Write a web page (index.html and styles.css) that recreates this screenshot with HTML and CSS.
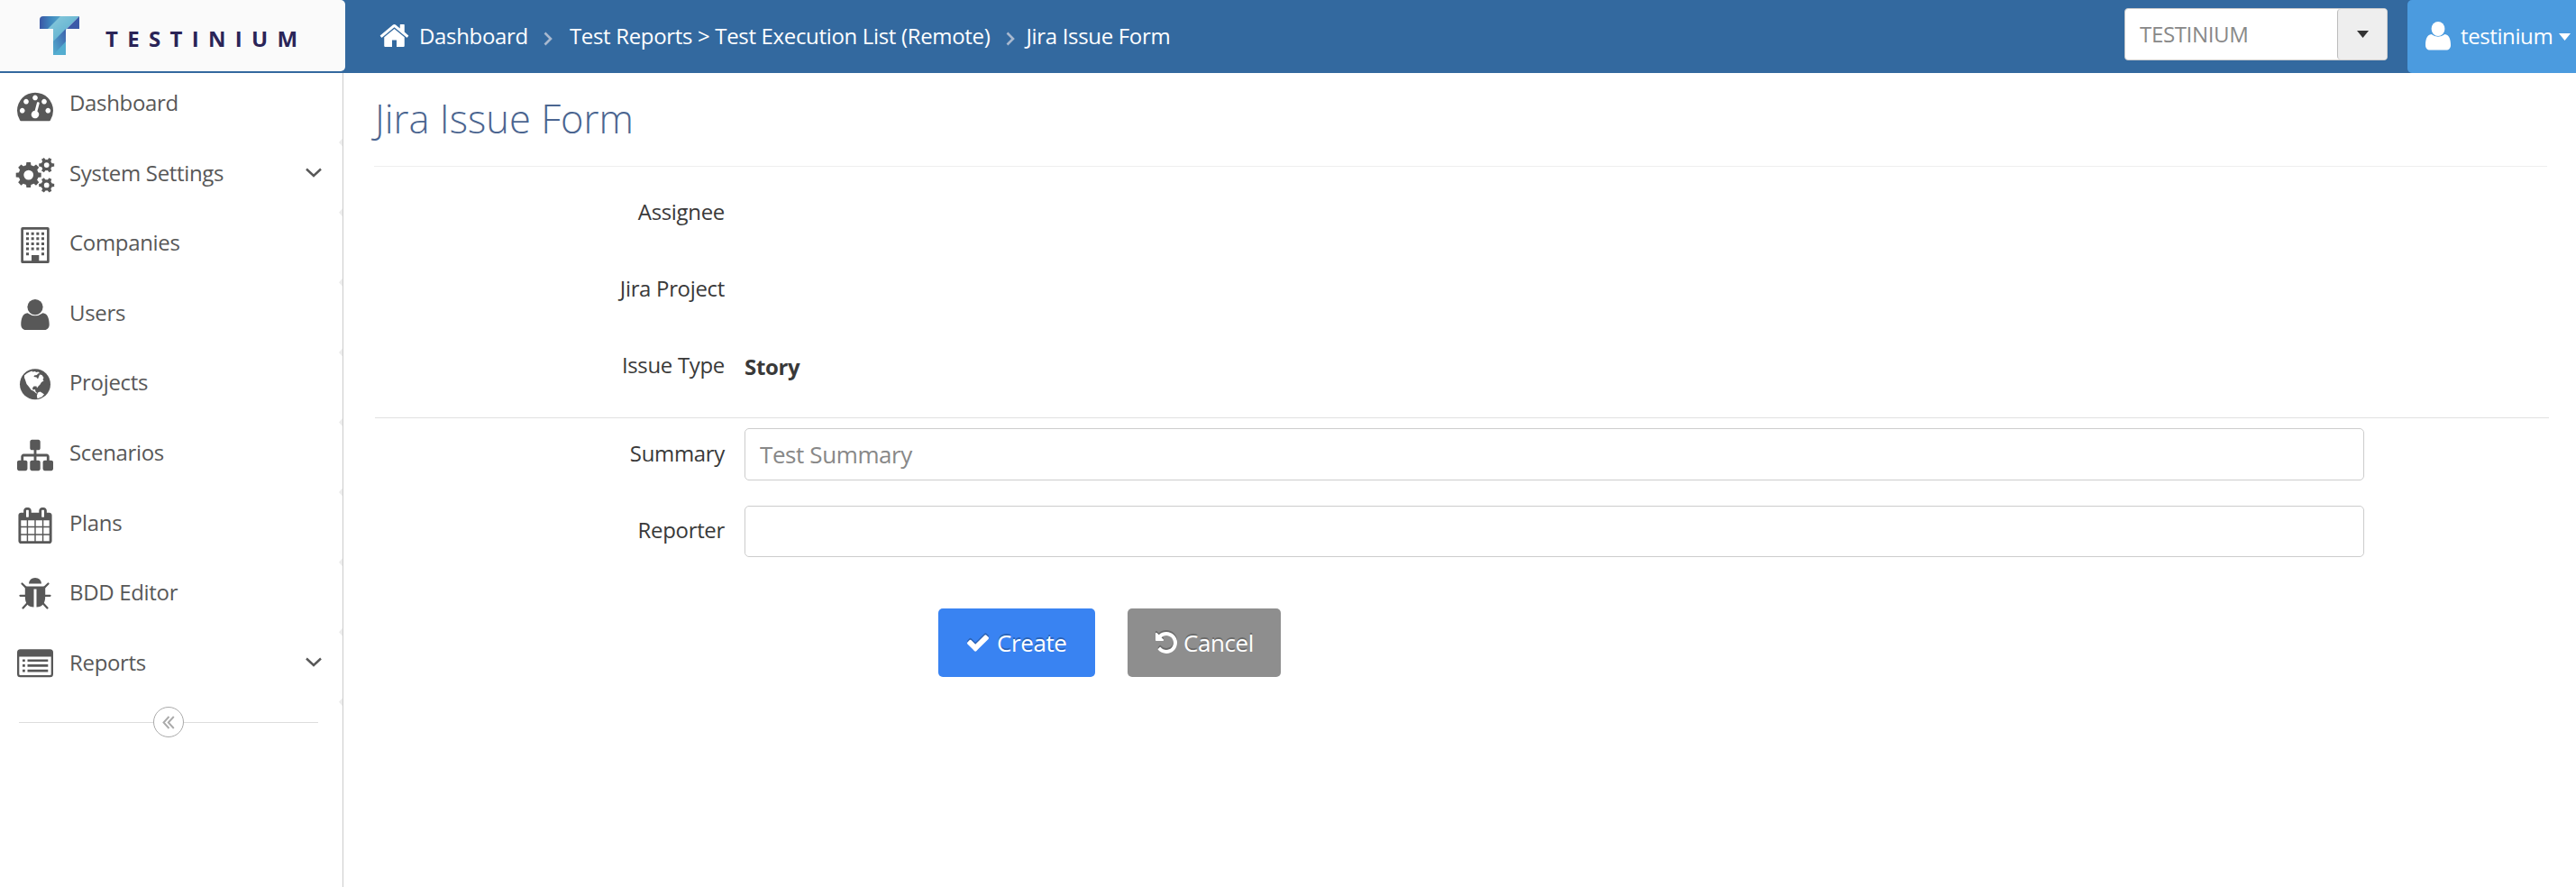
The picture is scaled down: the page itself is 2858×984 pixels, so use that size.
FILE: index.html
```html
<!DOCTYPE html>
<html lang="en">
<head>
<meta charset="utf-8">
<title>Jira Issue Form</title>
<link rel="stylesheet" href="styles.css">
</head>
<body>
<header class="topbar">
  <div class="brand">
    <svg class="brand-mark" viewBox="0 0 44 43">
      <defs>
        <linearGradient id="g1" x1="0" y1="0" x2="1" y2="0"><stop offset="0" stop-color="#3a56a5"/><stop offset=".5" stop-color="#3f86bd"/><stop offset="1" stop-color="#55a9cb"/></linearGradient>
        <linearGradient id="g2" x1="0" y1="0" x2="1" y2="1"><stop offset="0" stop-color="#8ccbdc"/><stop offset="1" stop-color="#4fa8cc"/></linearGradient>
        <linearGradient id="g3" x1="0" y1="1" x2="1" y2="0"><stop offset="0" stop-color="#56b0d0"/><stop offset="1" stop-color="#3a5fab"/></linearGradient>
      </defs>
      <path fill="url(#g1)" d="M4 0H24L10 14H0V4Q0 0 4 0Z"/>
      <path fill="url(#g2)" d="M23 0H44L15 29V14H9Z"/>
      <path fill="#3c5aa8" d="M44 0V14H30Z"/>
      <path fill="url(#g3)" d="M15 28L29 14V43H15Z"/>
      <path fill="#54add0" d="M15 43L29 28V43Z"/>
    </svg>
    <span class="brand-name">TESTINIUM</span>
  </div>
  <nav class="crumbs">
    <svg class="home" viewBox="0 0 1792 1792"><path fill="#fff" d="M1472 992v480q0 26-19 45t-45 19h-384v-384h-256v384h-384q-26 0-45-19t-19-45v-480q0-1 .5-3t.5-3l575-474 575 474q1 2 1 6zm223-69l-62 74q-8 9-21 11h-3q-13 0-21-7l-692-577-692 577q-12 8-24 7-13-2-21-11l-62-74q-8-10-7-23.5t11-21.5l719-599q32-26 76-26t76 26l244 204v-195q0-14 9-23t23-9h192q14 0 23 9t9 23v408l219 182q10 8 11 21.5t-7 23.5z"/></svg>
    <span class="crumb-first">Dashboard</span>
    <svg class="sep" viewBox="0 0 10 16"><path d="M1.5 1.5L8 8L1.5 14.5"/></svg>
    <span class="crumb-mid">Test Reports &gt; Test Execution List (Remote)</span>
    <svg class="sep" viewBox="0 0 10 16"><path d="M1.5 1.5L8 8L1.5 14.5"/></svg>
    <span class="crumb-last">Jira Issue Form</span>
  </nav>
  <div class="company">
    <span class="company-name">TESTINIUM</span>
    <span class="company-btn"><svg class="caret" viewBox="0 0 13 8"><path fill="#333" d="M0 0H13L6.5 8Z"/></svg></span>
  </div>
  <div class="account">
    <svg class="account-icon" viewBox="0 0 28 32"><ellipse cx="14" cy="8" rx="7.4" ry="8" fill="#fff"/><path fill="#fff" d="M6.5 14Q14 19.6 21.5 14C26.5 14.4 28 20 28 26C28 29.500 26 31.500 23 31.500H5C2 31.500 0 29.500 0 26C0 20 1.500 14.400 6.500 14Z"/></svg>
    <span>testinium</span>
    <svg class="caret" viewBox="0 0 13 8"><path fill="#fff" d="M0 0H13L6.500 8Z"/></svg>
  </div>
</header>
<div class="body">
  <aside class="sidebar">
    <a class="item"><svg class="icon" viewBox="0 0 1792 1792"><path d="M384 1152q0-53-37.5-90.5t-90.5-37.5-90.5 37.5-37.5 90.5 37.5 90.5 90.5 37.5 90.5-37.5 37.5-90.5zm192-448q0-53-37.5-90.5t-90.5-37.5-90.5 37.5-37.5 90.5 37.5 90.5 90.5 37.5 90.5-37.5 37.5-90.5zm428 481l101-382q6-26-7.5-48.5t-38.5-29.5-48 6.5-30 39.5l-101 382q-60 5-107 43.5t-63 98.5q-20 77 20 146t117 89 146-20 89-117q16-60-6-117t-72-91zm660-33q0-53-37.5-90.5t-90.5-37.5-90.5 37.5-37.5 90.5 37.5 90.5 90.5 37.5 90.5-37.5 37.5-90.5zm-640-640q0-53-37.5-90.5t-90.5-37.5-90.5 37.5-37.5 90.5 37.5 90.5 90.5 37.5 90.5-37.5 37.5-90.5zm448 192q0-53-37.5-90.5t-90.5-37.5-90.5 37.5-37.5 90.5 37.5 90.5 90.5 37.5 90.5-37.5 37.5-90.5zm320 448q0 261-141 483-19 29-54 29h-1402q-35 0-54-29-141-221-141-483 0-182 71-348t191-286 286-191 348-71 348 71 286 191 191 286 71 348z"/></svg><span>Dashboard</span></a>
    <a class="item"><svg class="icon" viewBox="0 0 40 40">
      <defs>
        <path id="tooth" d="M-2.900 -9.500L-2.300 -14H2.300L2.900 -9.500Z"/>
        <path id="tooth-s" d="M-2.100 -5.400L-1.500 -8.600Q0 -8.200 1.500 -8.600L2.100 -5.400Z"/>
        <g id="gear-s"><circle r="4.500" fill="none" stroke="#585858" stroke-width="3.200"/><use href="#tooth-s" transform="rotate(30)"/><use href="#tooth-s" transform="rotate(90)"/><use href="#tooth-s" transform="rotate(150)"/><use href="#tooth-s" transform="rotate(210)"/><use href="#tooth-s" transform="rotate(270)"/><use href="#tooth-s" transform="rotate(330)"/></g>
      </defs>
      <g transform="translate(12.700 19.100)"><circle r="8.200" fill="none" stroke="#585858" stroke-width="5.600"/><use href="#tooth"/><use href="#tooth" transform="rotate(45)"/><use href="#tooth" transform="rotate(90)"/><use href="#tooth" transform="rotate(135)"/><use href="#tooth" transform="rotate(180)"/><use href="#tooth" transform="rotate(225)"/><use href="#tooth" transform="rotate(270)"/><use href="#tooth" transform="rotate(315)"/></g>
      <use href="#gear-s" x="32.700" y="8.100"/><use href="#gear-s" x="32.700" y="30.400"/></svg><span>System Settings</span><svg class="chev" viewBox="0 0 18 11"><path d="M1 1.500L9 9L17 1.500"/></svg></a>
    <a class="item"><svg class="icon" viewBox="0 0 40 40"><rect x="5.600" y="1.300" width="28.800" height="37.400" rx=".5" fill="none" stroke="#585858" stroke-width="2.700"/><path fill="none" stroke="#585858" stroke-width="3" stroke-dasharray="3 2.670" d="M10 7.200H30M10 12.800H30M10 18.500H30M10 24.100H30"/><path d="M10 28.200h3v3h-3zM27 28.200h3v3h-3zM16 31h8.300v8H16z"/></svg><span>Companies</span></a>
    <a class="item"><svg class="icon" viewBox="0 0 40 40"><circle cx="20" cy="10.600" r="8.600"/><path d="M11.500 17.300Q20 23.400 28.500 17.300C34 17.600 35.700 24 35.700 30C35.700 33.500 33.500 36 30.500 36H9.500C6.500 36 4.300 33.500 4.300 30C4.300 24 6 17.600 11.500 17.300Z"/></svg><span>Users</span></a>
    <a class="item"><svg class="icon" viewBox="0 0 40 40"><circle cx="20" cy="19.300" r="17"/><path fill="#fff" d="M8 9.500L11 7L14 5.500L16.500 4.500L17 5.500L20 5L21 6L23.500 5.500L25 7L23 7.500L22 9L19 9.500L18.500 11L21.500 11.500L23 13.500L24 11L25 8.500L27.500 9L29.500 12L28.500 14L29.500 15.500L27 17L25.500 19.500L23.500 21.500L22 23.500L21.500 21.500L18.500 21.500L17 23.500L17.500 25.500L20 25L20.500 27.500L22.500 29.500L21 29.200L18.500 27L15.500 25.500L13 22L10.500 19L9 14.500L8 12Z"/><path fill="#fff" d="M23 28.500L25.500 27.500L28 29L30 30.500L27.500 33.200L22.500 35.300L21.900 32Z"/></svg><span>Projects</span></a>
    <a class="item"><svg class="icon" viewBox="0 0 1792 1792"><path d="M1792 1248v320q0 40-28 68t-68 28h-320q-40 0-68-28t-28-68v-320q0-40 28-68t68-28h96v-192h-512v192h96q40 0 68 28t28 68v320q0 40-28 68t-68 28h-320q-40 0-68-28t-28-68v-320q0-40 28-68t68-28h96v-192h-512v192h96q40 0 68 28t28 68v320q0 40-28 68t-68 28h-320q-40 0-68-28t-28-68v-320q0-40 28-68t68-28h96v-192q0-52 38-90t90-38h512v-192h-96q-40 0-68-28t-28-68v-320q0-40 28-68t68-28h320q40 0 68 28t28 68v320q0 40-28 68t-68 28h-96v192h512q52 0 90 38t38 90v192h96q40 0 68 28t28 68z"/></svg><span>Scenarios</span></a>
    <a class="item"><svg class="icon" viewBox="0 0 1792 1792"><path d="M192 1664h288v-288h-288v288zm352 0h320v-288h-320v288zm-352-352h288v-320h-288v320zm352 0h320v-320h-320v320zm-352-384h288v-288h-288v288zm736 736h320v-288h-320v288zm-384-736h320v-288h-320v288zm768 736h288v-288h-288v288zm-384-352h320v-320h-320v320zm-352-864v-288q0-13-9.500-22.500t-22.500-9.500h-64q-13 0-22.500 9.500t-9.500 22.500v288q0 13 9.500 22.500t22.500 9.500h64q13 0 22.500-9.500t9.500-22.500zm736 864h288v-320h-288v320zm-384-384h320v-288h-320v288zm384 0h288v-288h-288v288zm32-480v-288q0-13-9.500-22.500t-22.500-9.500h-64q-13 0-22.500 9.500t-9.500 22.500v288q0 13 9.500 22.500t22.500 9.500h64q13 0 22.500-9.500t9.500-22.500zm384-64v1280q0 52-38 90t-90 38h-1408q-52 0-90-38t-38-90v-1280q0-52 38-90t90-38h128v-96q0-66 47-113t113-47h64q66 0 113 47t47 113v96h384v-96q0-66 47-113t113-47h64q66 0 113 47t47 113v96h128q52 0 90 38t38 90z"/></svg><span>Plans</span></a>
    <a class="item"><svg class="icon" viewBox="0 0 40 40"><path d="M13 7.600Q13.500 1 20 .9Q26.500 1 27 7.600ZM8.800 10.500H31.200V22C31.200 29 28 33.500 21.500 33.500V13.500H18.500V33.500C12 33.500 8.800 29 8.800 22Z"/><path fill="none" stroke="#585858" stroke-width="2.300" stroke-linecap="round" d="M5.500 7.500L11 12.800M34.500 7.500L29 12.800M3.500 20.800H10M36.500 20.800H30M6.500 34.500L12 28.500M33.500 34.500L28 28.500"/></svg><span>BDD Editor</span></a>
    <a class="item"><svg class="icon" viewBox="0 0 40 40"><path fill-rule="evenodd" d="M3.500 2.200H36.500Q40 2.200 40 5.700V29.700Q40 33.200 36.500 33.200H3.500Q0 33.200 0 29.700V5.700Q0 2.200 3.500 2.200ZM2.300 10.500V29.700Q2.300 30.900 3.500 30.900H36.500Q37.700 30.900 37.700 29.700V10.500Z"/><path d="M6 13.400h2.800v2.600H6zM11.500 13.400h22.800v2.600H11.500zM6 19.100h2.800v2.600H6zM11.500 19.100h22.800v2.600H11.500zM6 24.800h2.800v2.600H6zM11.500 24.800h22.800v2.600H11.500z"/></svg><span>Reports</span><svg class="chev" viewBox="0 0 18 11"><path d="M1 1.500L9 9L17 1.500"/></svg></a>
    <div class="collapse">
      <i class="rule"></i>
      <span class="collapse-btn"><svg viewBox="0 0 14 15"><path d="M7.500 1L1.500 7.500L7.500 14M12.800 1L6.800 7.500L12.800 14"/></svg></span>
      <i class="rule"></i>
    </div>
  </aside>
  <main class="content">
    <h1>Jira Issue Form</h1>
    <form class="form">
      <div class="row row-text"><label>Assignee</label></div>
      <div class="row row-text"><label>Jira Project</label></div>
      <div class="row row-type"><label>Issue Type</label><b>Story</b></div>
      <div class="row row-input"><label>Summary</label><input type="text" placeholder="Test Summary"></div>
      <div class="row row-input row-short"><label>Reporter</label><input type="text"></div>
      <div class="actions">
        <button type="button" class="btn btn-create"><svg class="btn-icon" viewBox="121 200 1550 1400"><path fill="#fff" d="M1671 566q0 40-28 68l-724 724-136 136q-28 28-68 28t-68-28l-136-136-362-362q-28-28-28-68t28-68l136-136q28-28 68-28t68 28l294 295 656-657q28-28 68-28t68 28l136 136q28 28 28 68z"/></svg>Create</button>
        <button type="button" class="btn btn-cancel"><svg class="btn-icon" viewBox="128 128 1536 1536"><path fill="#fff" d="M1664 896q0 156-61 298t-164 245-245 164-298 61q-172 0-327-72.500t-264-204.500q-7-10-6.500-22.500t8.500-20.500l137-138q10-9 25-9 16 2 23 12 73 95 179 147t225 52q104 0 198.500-40.500t163.500-109.500 109.500-163.500 40.500-198.500-40.500-198.500-109.500-163.500-163.500-109.500-198.500-40.500q-98 0-188 35.500t-160 101.500l137 138q31 30 14 69-17 40-59 40h-448q-26 0-45-19t-19-45v-448q0-42 40-59 39-17 69 14l130 129q107-101 244.500-156.500t284.500-55.500q156 0 298 61t245 164 164 245 61 298z"/></svg>Cancel</button>
      </div>
    </form>
  </main>
</div>
</body>
</html>
```
FILE: styles.css
```css
* { box-sizing: border-box; }
body {
  margin: 0;
  height: 984px;
  overflow: hidden;
  display: flex;
  flex-direction: column;
  background: #fff;
  color: #393939;
  font: 24px "Open Sans", sans-serif;
  letter-spacing: -.33px;
}
svg { flex: none; display: block; overflow: visible; }

.topbar {
  height: 81px;
  flex: none;
  display: flex;
  align-items: flex-start;
  background: #33699f;
  color: #fff;
}
.brand {
  width: 383px;
  height: 79px;
  flex: none;
  display: flex;
  padding: 18px 0 0 44px;
  background: #fafafa;
  border-radius: 0 5px 5px 0;
}
.brand-mark { width: 44px; height: 43px; }
.brand-name {
  margin-left: 29px;
  line-height: 50px;
  font-weight: 700;
  letter-spacing: 10.3px;
  color: #2a2457;
  white-space: nowrap;
}
.crumbs {
  display: flex;
  align-items: center;
  height: 79px;
  padding-left: 37px;
  white-space: nowrap;
}
.home { width: 35px; height: 35px; margin-right: 10px; }
.sep { width: 10px; height: 16px; margin-top: 6px; }
.sep path { fill: none; stroke: #a9b9cf; stroke-width: 2.6; }
.crumb-first { margin-right: 17px; }
.crumb-mid { margin: 0 17px 0 19px; }
.crumb-last { margin-left: 13px; }
.company {
  width: 292px;
  height: 58px;
  margin: 9px 22px 0 auto;
  display: flex;
  justify-content: space-between;
  background: #fff;
  border: 1px solid #ccc;
  border-radius: 4px;
}
.company-name { padding-left: 16px; line-height: 56px; color: #888; }
.company-btn {
  width: 55px;
  display: grid;
  place-items: center;
  background: #eee;
  border-left: 1px solid #bbb;
  border-radius: 4px;
}
.caret { width: 13px; height: 8px; }
.account {
  width: 187px;
  height: 81px;
  flex: none;
  display: flex;
  align-items: center;
  gap: 11px;
  padding-left: 20px;
  background: #4b9bdf;
  border-radius: 5px 0 0 5px;
}
.account span { letter-spacing: -.4px; margin-top: -2px; }
.account-icon { width: 28px; height: 32px; margin-top: -2px; }
.account .caret { margin-left: -4px; }

.body { flex: 1; display: flex; min-height: 0; }
.sidebar {
  width: 381px;
  flex: none;
  border-right: 1px solid #ccc;
  color: #585858;
}
.item {
  position: relative;
  height: 77.6px;
  display: flex;
  align-items: flex-start;
  padding: 0 23px 0 19px;
}
.item::after {
  content: "";
  position: absolute;
  right: 0;
  bottom: -4px;
  width: 4px;
  height: 9px;
  background: #ececec;
  clip-path: polygon(100% 0, 100% 100%, 0 50%);
}
.item span { margin-left: 18px; line-height: 66px; }
.icon { width: 40px; height: 40px; margin-top: 16px; fill: #585858; }
.chev { width: 18px; height: 11px; margin: 27px 0 0 auto; }
.chev path { fill: none; stroke: #585858; stroke-width: 2.4; }
.collapse {
  display: flex;
  align-items: center;
  margin-top: 5px;
  padding: 0 27px 0 21px;
}
.rule { height: 1px; flex: 1; background: #ddd; }
.rule:first-child { flex: 0 0 149px; }
.collapse-btn {
  width: 34px;
  height: 34px;
  display: grid;
  place-items: center;
  border: 1px solid #aaa;
  border-radius: 50%;
}
.collapse-btn svg { width: 14px; height: 15px; }
.collapse-btn path { fill: none; stroke: #aaa; stroke-width: 1.9; }

.content { flex: 1; padding: 0 30px 0 34px; }
h1 {
  height: 104px;
  margin: 0 2px 0 0;
  padding-left: 1px;
  border-bottom: 1px solid #eee;
  font-size: 43.5px;
  font-weight: 300;
  line-height: 102px;
  letter-spacing: 0;
  color: #4b6590;
}
.form { padding: 28px 0 0 1px; }
.row { display: flex; }
.row label { width: 388px; flex: none; text-align: right; line-height: 44px; }
.row b { margin: 2px 0 0 22px; line-height: 44px; }
.row-text { height: 85px; }
.row-type { height: 81px; border-bottom: 1px solid #e0e0e0; }
.row-input { padding-top: 11px; height: 97px; }
.row-input label { line-height: 56px; }
.row-short { padding-top: 0; height: 114px; }
.row-short label { line-height: 54px; }
.row input {
  width: 1797px;
  height: 58px;
  margin-left: 22px;
  padding: 0 16px;
  border: 1px solid #ccc;
  border-radius: 5px;
  background: #fff;
  font: 26px "Open Sans", sans-serif;
  letter-spacing: -.4px;
}
.row-short input { height: 57px; }
.row input::placeholder { color: #888; opacity: 1; }
.actions { display: flex; gap: 36px; padding-left: 625px; }
.btn {
  width: 174px;
  height: 76px;
  display: flex;
  align-items: center;
  gap: 9px;
  padding: 0 0 0 32px;
  border: 0;
  border-radius: 5px;
  font: 26px "Open Sans", sans-serif;
  letter-spacing: -.4px;
  color: #fff;
  text-shadow: 0 -2px 0 rgba(0, 0, 0, .25);
}
.btn-create { background: #3983f2; }
.btn-cancel { width: 170px; padding-left: 31px; gap: 7px; background: #8e8e8e; }
.btn-icon { width: 24px; height: 24px; filter: drop-shadow(0 -2px 0 rgba(0, 0, 0, .25)); }
```
